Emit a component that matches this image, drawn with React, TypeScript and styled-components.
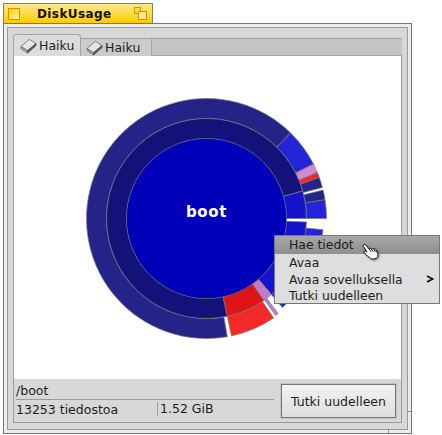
import React from "react";
import styled, { createGlobalStyle } from "styled-components";

const GlobalStyle = createGlobalStyle`
  html, body {
    margin: 0;
    padding: 0;
    background: #fff;
    font-family: "DejaVu Sans", sans-serif;
    font-size: 12.5px;
    color: #1c1c1c;
  }
`;

const CX = 192.5;
const CY = 162.5;

type Slice = { from: number; to: number; fill: string; outer?: number };

const NAVY = "#12127a";
const NAVY_LIGHT = "#242488";
const BLUE = "#1414cc";
const BLUE_LIGHT = "#2424d8";
const PURPLE = "#c27cc6";
const RED = "#e01414";
const RED_LIGHT = "#f52828";

const innerRing: Slice[] = [
  { from: 168, to: 434, fill: NAVY },
  { from: 74, to: 90, fill: BLUE },
  { from: 92, to: 139.5, fill: BLUE },
  { from: 139.5, to: 145, fill: PURPLE },
  { from: 145, to: 168, fill: RED },
];

const outerRing: Slice[] = [
  { from: 170, to: 404.5, fill: NAVY_LIGHT },
  { from: 44.5, to: 63, fill: BLUE_LIGHT },
  { from: 63, to: 67.5, fill: "#cf8ad2" },
  { from: 67.5, to: 70, fill: RED_LIGHT },
  { from: 70, to: 75, fill: NAVY_LIGHT },
  { from: 76.3, to: 81, fill: NAVY_LIGHT },
  { from: 81, to: 90, fill: BLUE_LIGHT },
  { from: 95.5, to: 139.5, fill: BLUE_LIGHT, outer: 117 },
  { from: 143, to: 144.5, fill: PURPLE, outer: 119 },
  { from: 146, to: 168, fill: RED_LIGHT },
];

const point = (r: number, deg: number) => {
  const a = (deg * Math.PI) / 180;
  return `${(CX + r * Math.sin(a)).toFixed(2)} ${(CY - r * Math.cos(a)).toFixed(2)}`;
};

const sector = (r0: number, r1: number, from: number, to: number) => {
  const large = to - from > 180 ? 1 : 0;
  return [
    `M${point(r0, from)}`,
    `A${r0} ${r0} 0 ${large} 1 ${point(r0, to)}`,
    `L${point(r1, to)}`,
    `A${r1} ${r1} 0 ${large} 0 ${point(r1, from)}`,
    "Z",
  ].join(" ");
};

const DiskIcon = () => (
  <svg width="17" height="16" viewBox="0 0 17 16">
    <path d="M1 8.5 L8.5 2 Q9.5 1.4 10.5 2 L16 5.5 L7.5 12.8 Z" fill="#e6e6e6" stroke="#666" strokeWidth="0.8" strokeLinejoin="round" />
    <path d="M1 8.5 L1 10 Q1 10.6 1.6 11 L7.5 15 L7.5 12.8 Z" fill="#b4b4b4" stroke="#666" strokeWidth="0.8" strokeLinejoin="round" />
    <path d="M7.5 12.8 L7.5 15 L16 7.6 L16 5.5 Z" fill="#5c5c5c" stroke="#444" strokeWidth="0.8" strokeLinejoin="round" />
    <path d="M2.4 10 L4.4 11.4" stroke="#6aa35a" strokeWidth="1" />
  </svg>
);

const HandCursor = () => (
  <Hand width="20" height="20" viewBox="0 0 20 20">
    <path
      d="M2.4 3.2 C1.6 1.8 3.4 .8 4.4 1.8 L8.2 6 C8.8 5.2 10 5.2 10.6 6 C11.2 5.2 12.4 5.4 12.9 6.2 C13.6 5.8 14.6 6.2 15 7 L16.6 10.4 C17.4 12.4 16.8 14.2 15.2 15.2 C13.4 16.4 11 16.4 9.4 15.2 L6.6 13 C5.2 12 4 10.6 3.2 9.6 C2.4 8.6 3.6 7.4 4.8 8.2 L6 9.2 Z"
      fill="#fff"
      stroke="#111"
      strokeWidth="1"
      strokeLinejoin="round"
    />
    <path d="M8.2 6 L10.4 9 M10.6 6 L12.4 8.8 M12.9 6.2 L14.4 9" stroke="#111" strokeWidth="0.9" fill="none" />
  </Hand>
);

export default function App() {
  return (
    <Page>
      <GlobalStyle />
      <TitleTab>
        <CloseBox />
        <Title>DiskUsage</Title>
        <ZoomBox>
          <ZoomSquare />
          <ZoomSquare $front />
        </ZoomBox>
      </TitleTab>
      <WindowFrame>
        <WindowInner>
          <TabBar>
            <Tab $active>
              <DiskIcon />
              Haiku
            </Tab>
            <Tab>
              <DiskIcon />
              Haiku
            </Tab>
          </TabBar>
          <TabBody>
            <ChartArea>
              <svg width="385" height="323" viewBox="0 0 385 323">
                {outerRing.map((s) => (
                  <path
                    key={s.from}
                    d={sector(100, s.outer ?? 120, s.from, s.to)}
                    fill={s.fill}
                    stroke="#777"
                    strokeWidth="0.7"
                  />
                ))}
                {innerRing.map((s) => (
                  <path
                    key={s.from}
                    d={sector(80, 100, s.from, s.to)}
                    fill={s.fill}
                    stroke="#777"
                    strokeWidth="0.7"
                  />
                ))}
                <circle cx={CX} cy={CY} r="80" fill="#0000b8" stroke="#666" strokeWidth="0.5" />
                <ChartLabel x={CX} y={CY - 6}>
                  boot
                </ChartLabel>
              </svg>
            </ChartArea>
            <StatusBar>
              <StatusInfo>
                <PathRow>/boot</PathRow>
                <CountRow>
                  <FileCount>13253 tiedostoa</FileCount>
                  <DiskSize>1.52 GiB</DiskSize>
                </CountRow>
              </StatusInfo>
              <RescanButton>Tutki uudelleen</RescanButton>
            </StatusBar>
          </TabBody>
        </WindowInner>
        <ResizeTickRight />
        <ResizeTickBottom />
      </WindowFrame>
      <Menu>
        <MenuItem $selected>Hae tiedot</MenuItem>
        <MenuItem>Avaa</MenuItem>
        <MenuItem>
          Avaa sovelluksella
          <Chevron width="8" height="8" viewBox="0 0 8 8">
            <path d="M1 1 L6.5 4 L1 7" fill="none" stroke="#111" strokeWidth="1.8" />
          </Chevron>
        </MenuItem>
        <MenuItem>Tutki uudelleen</MenuItem>
      </Menu>
      <HandCursor />
    </Page>
  );
}

const Page = styled.div`
  position: relative;
  width: 442px;
  height: 435px;
  padding: 3px 0 0 3px;
  box-sizing: border-box;
  overflow: hidden;
`;

const TitleTab = styled.div`
  display: flex;
  align-items: center;
  box-sizing: border-box;
  width: 150px;
  height: 20px;
  padding: 0 5px 0 4px;
  border: 1px solid #8a8258;
  border-bottom: none;
  background: linear-gradient(#ffe98a, #ffcb00);
`;

const CloseBox = styled.div`
  box-sizing: border-box;
  width: 12px;
  height: 12px;
  border: 1px solid #c49a00;
  background: linear-gradient(135deg, #ffcb00, #fff2b0);
`;

const Title = styled.span`
  margin-left: 17px;
  font-weight: bold;
  font-size: 12px;
  letter-spacing: 0.4px;
  color: #111;
  flex: 1;
`;

const ZoomBox = styled.div`
  position: relative;
  width: 13px;
  height: 13px;
`;

const ZoomSquare = styled.div<{ $front?: boolean }>`
  position: absolute;
  box-sizing: border-box;
  left: ${(p) => (p.$front ? "4px" : "0")};
  top: ${(p) => (p.$front ? "4px" : "0")};
  width: ${(p) => (p.$front ? "9px" : "7px")};
  height: ${(p) => (p.$front ? "9px" : "7px")};
  border: 1px solid #c49a00;
  background: ${(p) => (p.$front ? "#ffe98a" : "#ffd94a")};
`;

const WindowFrame = styled.div`
  position: relative;
  box-sizing: border-box;
  width: 409px;
  height: 411px;
  padding: 3px;
  border: 1px solid #767676;
  background: #ececec;
`;

const WindowInner = styled.div`
  box-sizing: border-box;
  height: 100%;
  padding: 6px 5px 6px 5px;
  border: 1px solid #9a9a9a;
  background: #d8d8d8;
  display: flex;
  flex-direction: column;
`;

const TabBar = styled.div`
  display: flex;
  align-items: flex-end;
  height: 22px;
  flex: none;
  background: linear-gradient(#d8d8d8 0 4px, #a0a0a0 4px 5px, #c4c4c4 5px);
  box-shadow: inset 0 -1px 0 #a8a8a8;
`;

const Tab = styled.div<{ $active?: boolean }>`
  display: flex;
  align-items: center;
  gap: 2px;
  box-sizing: border-box;
  height: ${(p) => (p.$active ? "22px" : "17px")};
  width: ${(p) => (p.$active ? "68px" : "71px")};
  padding: 0 0 0 ${(p) => (p.$active ? "6px" : "5px")};
  background: ${(p) => (p.$active ? "#dcdcdc" : "#cbcbcb")};
  border-right: 1px solid #a4a4a4;
  border-left: ${(p) => (p.$active ? "1px solid #a4a4a4" : "none")};
  border-top: ${(p) => (p.$active ? "1px solid #a4a4a4" : "none")};
  border-top-left-radius: ${(p) => (p.$active ? "3px" : "0")};
  border-top-right-radius: ${(p) => (p.$active ? "3px" : "0")};
`;

const TabBody = styled.div`
  flex: 1;
  display: flex;
  flex-direction: column;
  min-height: 0;
  border: 1px solid #9a9a9a;
  border-top: none;
`;

const ChartArea = styled.div`
  height: 323px;
  flex: none;
  display: flex;
  background: #fff;
`;

const ChartLabel = styled.text`
  fill: #fff;
  font-family: "DejaVu Sans", sans-serif;
  font-weight: bold;
  font-size: 15px;
  letter-spacing: 0.6px;
  text-anchor: middle;
  dominant-baseline: middle;
`;

const StatusBar = styled.div`
  flex: 1;
  display: flex;
  align-items: flex-start;
  background: #d8d8d8;
  padding: 5px 3px 0 2px;
`;

const StatusInfo = styled.div`
  width: 258px;
  margin-right: 7px;
`;

const PathRow = styled.div`
  height: 16px;
  line-height: 15px;
  margin-top: -1px;
  border-bottom: 1px solid #9c9c9c;
`;

const CountRow = styled.div`
  display: flex;
  height: 17px;
  line-height: 18px;
`;

const FileCount = styled.span`
  width: 141px;
  border-right: 1px solid #9c9c9c;
  height: 14px;
  margin-top: 2px;
  line-height: 15px;
`;

const DiskSize = styled.span`
  padding-left: 2px;
`;

const RescanButton = styled.button`
  width: 115px;
  height: 34px;
  padding: 0;
  font-family: inherit;
  font-size: 12.5px;
  color: #1c1c1c;
  border: 1px solid #777;
  background: linear-gradient(#f2f2f2, #dedede);
  box-shadow: 0 0 0 1px #c4c4c4;
`;

const ResizeTickRight = styled.div`
  position: absolute;
  right: 0;
  bottom: 21px;
  width: 4px;
  height: 1px;
  background: #8a8a8a;
`;

const ResizeTickBottom = styled.div`
  position: absolute;
  bottom: 0;
  right: 22px;
  width: 1px;
  height: 4px;
  background: #8a8a8a;
`;

const Menu = styled.div`
  position: absolute;
  left: 274px;
  top: 235px;
  box-sizing: border-box;
  width: 166px;
  height: 69px;
  border: 1px solid #777;
  background: #dedede;
`;

const MenuItem = styled.div<{ $selected?: boolean }>`
  position: relative;
  height: ${(p) => (p.$selected ? "18px" : "16.7px")};
  line-height: 17px;
  padding-left: 14px;
  font-size: 12.4px;
  white-space: nowrap;
  background: ${(p) => (p.$selected ? "linear-gradient(#a8a8a8, #8e8e8e)" : "transparent")};
`;

const Chevron = styled.svg`
  position: absolute;
  right: 5px;
  top: 4px;
`;

const Hand = styled.svg`
  position: absolute;
  left: 361px;
  top: 243px;
  filter: drop-shadow(1px 1px 1px rgba(0, 0, 0, 0.45));
`;
